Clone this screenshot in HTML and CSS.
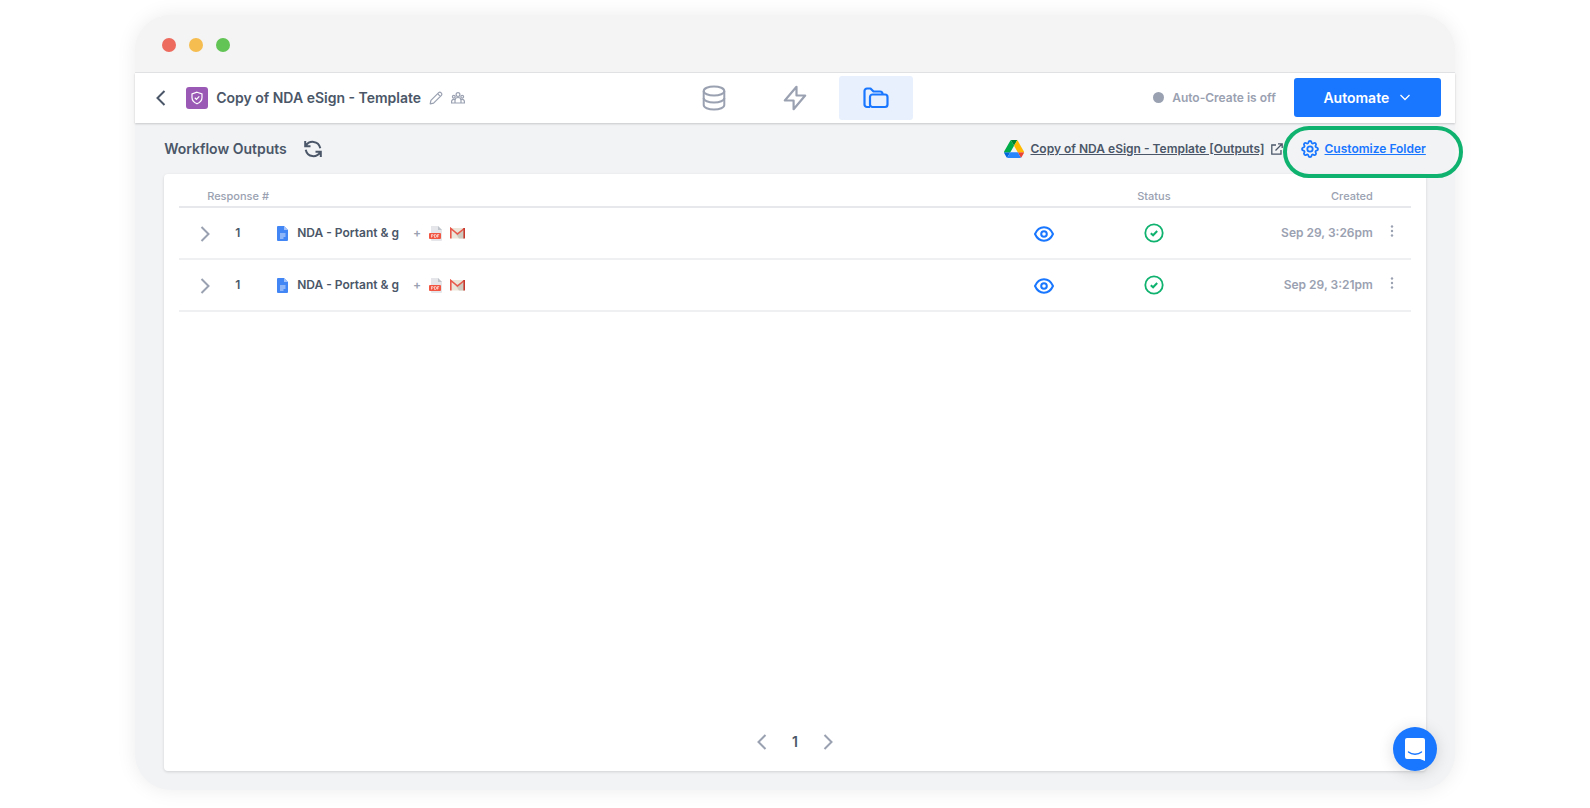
FILE: index.html
```html
<!DOCTYPE html>
<html lang="en">
  <head>
    <meta charset="UTF-8" />
    <meta name="viewport" content="width=device-width, initial-scale=1" />
    <title>Workflow Outputs</title>
    <link rel="stylesheet" href="styles.css">
  </head>
  <body>
    <svg class="sprite" aria-hidden="true">
      <symbol id="chevron-right" viewBox="0 0 10 16"><path d="M1.5 1l7 7-7 7" fill="none" stroke="currentColor" stroke-width="2"/></symbol>
      <symbol id="chevron-left" viewBox="0 0 10 16"><path d="M8.5 1l-7 7 7 7" fill="none" stroke="currentColor" stroke-width="2"/></symbol>
      <symbol id="doc" viewBox="0 0 11 15">
        <path d="M1 0h6l4 4v10a1 1 0 0 1-1 1H1a1 1 0 0 1-1-1V1a1 1 0 0 1 1-1z" fill="#4285f4"/>
        <path d="M7 0l4 4H7z" fill="#a1c2fa"/>
        <path d="M3 8h5.500M3 10h5.500M3 12h3.500" stroke="#dce8fd" stroke-width="1"/>
      </symbol>
      <symbol id="pdf" viewBox="0 0 13 15">
        <path d="M2 0h7l4 4v10a1 1 0 0 1-1 1H3a1 1 0 0 1-1-1z" fill="#e4e6e9"/>
        <path d="M9 0l4 4H9z" fill="#bfc4ca"/>
        <rect y="7" width="12" height="6" rx="1" fill="#f15642"/>
        <path d="M2.500 11.500v-3h1a.8.8 0 0 1 0 1.600h-1M5.500 8.500v3h.6a1.500 1.500 0 0 0 0-3zM8.500 11.500v-3h1.700M8.500 10h1.400" fill="none" stroke="#fff" stroke-width=".6"/>
      </symbol>
      <symbol id="gmail" viewBox="0 0 15 12">
        <path d="M1 1h13v10.500H1z" fill="#ece6da"/>
        <path d="M14 2v9.500H9L5.500 6.500z" fill="#cfcabf"/>
        <path d="M.8 11.500V1.500l6.700 5.500 6.700-5.500" fill="none" stroke="#e8584b" stroke-width="1.600"/>
        <path d="M14.200 1v10.500" stroke="#c5372c" stroke-width="1.600"/>
      </symbol>
      <symbol id="eye" viewBox="0 0 20 16">
        <path d="M1 8c2-4.500 5.200-6.700 9-6.700S17 3.500 19 8c-2 4.500-5.200 6.700-9 6.700S3 12.500 1 8z" fill="none" stroke="currentColor" stroke-width="2" stroke-linejoin="round"/>
        <circle cx="10" cy="8" r="2.800" fill="none" stroke="currentColor" stroke-width="2"/>
      </symbol>
      <symbol id="check" viewBox="0 0 20 20">
        <circle cx="10" cy="10" r="8.700" fill="none" stroke="currentColor" stroke-width="1.800"/>
        <path d="M6.800 10.200l2.300 2.100 4.100-4.300" fill="none" stroke="currentColor" stroke-width="2"/>
      </symbol>
      <symbol id="dots" viewBox="0 0 4 12">
        <g fill="currentColor"><circle cx="2" cy="1.500" r="1.200"/><circle cx="2" cy="6" r="1.200"/><circle cx="2" cy="10.500" r="1.200"/></g>
      </symbol>
    </svg>

    <div class="window">
      <div class="window__bar">
        <span class="window__dot window__dot--red"></span>
        <span class="window__dot window__dot--yellow"></span>
        <span class="window__dot window__dot--green"></span>
      </div>

      <header class="header">
        <div class="header__left">
          <button class="icon-button back" aria-label="Back">
            <svg width="10" height="16"><use href="#chevron-left"/></svg>
          </button>
          <span class="badge">
            <svg width="14" height="14" viewBox="0 0 14 14" fill="none" stroke="#fff" stroke-width="1.200">
              <path d="M7 1.200l5 1.700v3.600c0 3-2 5-5 6.300-3-1.300-5-3.300-5-6.300V2.900z"/>
              <path d="M4.800 6.800l1.600 1.500L9.300 5.300"/>
            </svg>
          </span>
          <h1 class="header__title">Copy of NDA eSign - Template</h1>
          <button class="icon-button edit" aria-label="Rename">
            <svg width="14" height="14" viewBox="0 0 14 14" fill="none" stroke="currentColor" stroke-width="1.200" stroke-linejoin="round">
              <path d="M1.200 12.800l.7-3.400 7.800-7.800c1.500-1.500 4.200 1.200 2.700 2.700l-7.800 7.800zM8.600 2.700l2.700 2.700"/>
            </svg>
          </button>
          <button class="icon-button share" aria-label="Share">
            <svg width="14" height="12" viewBox="0 0 14 12" fill="none" stroke="currentColor" stroke-width="1.200">
              <circle cx="7" cy="2.600" r="1.900"/>
              <circle cx="2.800" cy="4.700" r="1.400"/>
              <circle cx="11.200" cy="4.700" r="1.400"/>
              <path d="M4 11V8.500a3 3 0 0 1 6 0V11M4 11H.6V9.500a2.200 2.200 0 0 1 3.400-1.800M10 11h3.400V9.500A2.200 2.200 0 0 0 10 7.700M4 11h6"/>
            </svg>
          </button>
        </div>

        <nav class="tabs">
          <button class="tab" aria-label="Data">
            <svg width="24" height="26" viewBox="0 0 24 26" fill="none" stroke="currentColor" stroke-width="2">
              <ellipse cx="12" cy="6" rx="10.300" ry="4.600"/>
              <path d="M1.700 6v14c0 2.600 4.600 4.600 10.300 4.600s10.300-2 10.300-4.600V6"/>
              <path d="M1.700 13c0 2.600 4.600 4.600 10.300 4.600s10.300-2 10.300-4.600"/>
            </svg>
          </button>
          <button class="tab" aria-label="Workflow">
            <svg width="24" height="26" viewBox="0 0 24 26" fill="none" stroke="currentColor" stroke-width="2.200" stroke-linejoin="round">
              <path d="M13.500 1.800L1.800 15.500h8.800v8.700L22.200 10.500h-8.700z"/>
            </svg>
          </button>
          <button class="tab tab--active" aria-label="Outputs">
            <svg width="26" height="22" viewBox="0 0 26 22" fill="none" stroke="currentColor" stroke-width="2.200" stroke-linejoin="round">
              <path d="M7 20H4a2.500 2.500 0 0 1-2.500-2.500V4A2.500 2.500 0 0 1 4 1.500h3.500l3 3H17A2.500 2.500 0 0 1 19.500 7v.5"/>
              <rect x="7" y="7.500" width="17.500" height="12.500" rx="2.500"/>
            </svg>
          </button>
        </nav>

        <div class="header__right">
          <span class="status">Auto-Create is off</span>
          <button class="automate">
            Automate
            <svg width="12" height="7" viewBox="0 0 12 7"><path d="M1.500 1l4.500 4.500L10.500 1" fill="none" stroke="currentColor" stroke-width="1.300"/></svg>
          </button>
        </div>
      </header>

      <main class="main">
        <div class="toolbar">
          <h2 class="toolbar__title">Workflow Outputs</h2>
          <button class="icon-button refresh" aria-label="Refresh">
            <svg width="18" height="18" viewBox="0 0 18 18" fill="none" stroke="currentColor" stroke-width="2">
              <path d="M1.200 1v5.200h5.300M1.800 5.800C5.200.2 14.400.2 16.300 8.200"/>
              <path d="M16.800 17v-5.200h-5.300M16.200 12.200C12.800 17.800 3.600 17.800 1.700 9.800"/>
            </svg>
          </button>

          <a class="drive" href="#">
            <svg width="20" height="18" viewBox="0 0 87 78">
              <path d="M6.600 66.850l3.850 6.650c.8 1.400 1.950 2.500 3.300 3.300L27.500 53H0c0 1.550.4 3.100 1.200 4.500z" fill="#0066da"/>
              <path d="M43.650 25L29.900 1.200c-1.350.8-2.500 1.900-3.300 3.300L1.200 48.500A9 9 0 0 0 0 53h27.500z" fill="#00ac47"/>
              <path d="M73.550 76.800c1.350-.8 2.500-1.900 3.300-3.300l9.250-16c.8-1.400 1.200-2.950 1.200-4.500H59.800l5.850 11.500z" fill="#ea4335"/>
              <path d="M43.650 25L57.400 1.200C56.050.4 54.500 0 52.900 0H34.400c-1.600 0-3.150.45-4.500 1.200z" fill="#00832d"/>
              <path d="M59.800 53H27.500L13.750 76.800c1.350.8 2.900 1.200 4.500 1.200h50.800c1.600 0 3.150-.45 4.500-1.200z" fill="#2684fc"/>
              <path d="M73.400 26.500l-12.700-22c-.8-1.400-1.950-2.500-3.300-3.300L43.650 25 59.800 53h27.450c0-1.550-.4-3.100-1.200-4.500z" fill="#ffba00"/>
            </svg>
            <span class="drive__name">Copy of NDA eSign - Template [Outputs]</span>
            <svg width="12" height="12" viewBox="0 0 12 12" fill="none" stroke="currentColor" stroke-width="1.300">
              <path d="M5 2H.8v9.200H10V7M7 .8h4.200V5M11 1L4.500 7.500"/>
            </svg>
          </a>

          <a class="customize" href="#">
            <svg width="18" height="18" viewBox="0 0 24 24" fill="none" stroke="currentColor" stroke-width="2.400" stroke-linejoin="round">
              <circle cx="12" cy="12" r="3.600"/>
              <path d="M9.800 3.400C10.400.6 13.600.6 14.200 3.400c.3 1.200 1.400 1.700 2.500 1 2.300-1.400 4.300.6 2.900 2.900-.7 1.100-.2 2.200 1 2.500 2.800.6 2.800 3.800 0 4.400-1.200.3-1.700 1.400-1 2.500 1.400 2.300-.6 4.300-2.900 2.900-1.100-.7-2.200-.2-2.500 1-.6 2.800-3.800 2.800-4.400 0-.3-1.200-1.400-1.700-2.500-1-2.300 1.400-4.300-.6-2.900-2.900.7-1.100.2-2.200-1-2.500-2.800-.6-2.800-3.800 0-4.400 1.200-.3 1.700-1.400 1-2.500-1.400-2.300.6-4.300 2.900-2.900 1.100.7 2.200.2 2.500-1z"/>
            </svg>
            <span class="customize__text">Customize Folder</span>
          </a>
        </div>

        <section class="card">
          <table class="outputs">
            <colgroup>
              <col class="col-expand">
              <col class="col-number">
              <col>
              <col class="col-view">
              <col class="col-status">
              <col class="col-created">
              <col class="col-menu">
            </colgroup>
            <thead>
              <tr>
                <th class="outputs__response" colspan="2">Response #</th>
                <th></th>
                <th></th>
                <th class="outputs__center">Status</th>
                <th class="outputs__created">Created</th>
                <th></th>
              </tr>
            </thead>
            <tbody>
              <tr>
                <td class="outputs__expand"><button class="icon-button" aria-label="Expand"><svg width="10" height="16"><use href="#chevron-right"/></svg></button></td>
                <td class="outputs__number">1</td>
                <td>
                  <div class="file">
                    <svg width="11" height="15"><use href="#doc"/></svg>
                    <span class="file__name">NDA - Portant &amp; g</span>
                    <span class="file__plus">+</span>
                    <svg class="file__pdf" width="13" height="15"><use href="#pdf"/></svg>
                    <svg width="15" height="12"><use href="#gmail"/></svg>
                  </div>
                </td>
                <td class="outputs__center"><button class="icon-button view" aria-label="View"><svg width="20" height="16"><use href="#eye"/></svg></button></td>
                <td class="outputs__center"><svg class="done" width="20" height="20"><use href="#check"/></svg></td>
                <td class="outputs__created">Sep 29, 3:26pm</td>
                <td class="outputs__menu"><button class="icon-button" aria-label="More"><svg width="4" height="12"><use href="#dots"/></svg></button></td>
              </tr>
              <tr>
                <td class="outputs__expand"><button class="icon-button" aria-label="Expand"><svg width="10" height="16"><use href="#chevron-right"/></svg></button></td>
                <td class="outputs__number">1</td>
                <td>
                  <div class="file">
                    <svg width="11" height="15"><use href="#doc"/></svg>
                    <span class="file__name">NDA - Portant &amp; g</span>
                    <span class="file__plus">+</span>
                    <svg class="file__pdf" width="13" height="15"><use href="#pdf"/></svg>
                    <svg width="15" height="12"><use href="#gmail"/></svg>
                  </div>
                </td>
                <td class="outputs__center"><button class="icon-button view" aria-label="View"><svg width="20" height="16"><use href="#eye"/></svg></button></td>
                <td class="outputs__center"><svg class="done" width="20" height="20"><use href="#check"/></svg></td>
                <td class="outputs__created">Sep 29, 3:21pm</td>
                <td class="outputs__menu"><button class="icon-button" aria-label="More"><svg width="4" height="12"><use href="#dots"/></svg></button></td>
              </tr>
            </tbody>
          </table>

          <nav class="pager">
            <button class="icon-button" aria-label="Previous page"><svg width="10" height="16"><use href="#chevron-left"/></svg></button>
            <span class="pager__page">1</span>
            <button class="icon-button" aria-label="Next page"><svg width="10" height="16"><use href="#chevron-right"/></svg></button>
          </nav>
        </section>
      </main>

      <button class="chat" aria-label="Open chat">
        <svg width="20" height="23" viewBox="0 0 20 23">
          <path d="M2 0h16a2 2 0 0 1 2 2v21l-5-2H2a2 2 0 0 1-2-2V2a2 2 0 0 1 2-2z" fill="#fff"/>
          <path d="M3.500 14c3.500 3 9.500 3 13 0" fill="none" stroke="#1976ff" stroke-width="1.400" stroke-linecap="round"/>
        </svg>
      </button>
    </div>
  </body>
</html>
```
FILE: styles.css
```css
* {
  box-sizing: border-box;
}

body {
  display: flex;
  justify-content: center;
  min-height: 100vh;
  margin: 0;
  padding: 15px 0 18px;
  background-color: white;
  color: #4b5768;
  font-family: Inter, "Liberation Sans", sans-serif;
  font-size: 12px;
  font-weight: 600;
  line-height: 20px;
}

svg {
  display: block;
  flex: none;
}

h1,
h2 {
  margin: 0;
  font-weight: 600;
  white-space: nowrap;
}

button {
  font: inherit;
  cursor: pointer;
}

.sprite {
  position: absolute;
  width: 0;
  height: 0;
}

.icon-button {
  display: inline-flex;
  padding: 0;
  border: none;
  background: none;
  color: #9aa1b1;
  vertical-align: middle;
}

.window {
  position: relative;
  display: flex;
  flex-direction: column;
  width: 83%;
  border-radius: 36px;
  background-color: #f2f3f5;
  box-shadow: 0 0 20px rgba(0, 0, 0, 0.08);
}

.window__bar {
  display: flex;
  align-items: center;
  gap: 13px;
  height: 58px;
  padding: 3px 27px 0;
  border-bottom: 1px solid #e3e4e5;
  border-radius: 36px 36px 0 0;
  background-color: #f4f4f4;
}

.window__dot {
  width: 14px;
  height: 14px;
  border-radius: 50%;
}

.window__dot--red {
  background-color: #ed6a5e;
}

.window__dot--yellow {
  background-color: #f5bd4f;
}

.window__dot--green {
  background-color: #61c454;
}

.header {
  display: grid;
  grid-template-columns: 1fr auto 1fr;
  align-items: center;
  height: 50px;
  padding: 0 14px 1px;
  background-color: white;
  box-shadow: 0 1px 2px rgba(0, 0, 0, 0.18);
}

.header__left,
.header__right {
  display: flex;
  align-items: center;
}

.header__right {
  justify-content: flex-end;
}

.header__title {
  margin: 0 8px;
  font-size: 14px;
}

.back {
  margin: 0 20px 0 7px;
  color: #4b5768;
}

.badge {
  display: flex;
  align-items: center;
  justify-content: center;
  width: 22px;
  height: 22px;
  border-radius: 3px;
  background-color: #9b59b6;
}

.share {
  margin-left: 8px;
}

.tabs {
  display: flex;
  gap: 7px;
}

.tab {
  display: flex;
  align-items: center;
  justify-content: center;
  width: 74px;
  height: 44px;
  border: none;
  border-radius: 3px;
  background: none;
  color: #9aa1b1;
}

.tab--active {
  background-color: #e8f0fe;
  color: #1976ff;
}

.status {
  display: flex;
  align-items: center;
  gap: 8px;
  color: #9aa1b1;
}

.status:before {
  content: '';
  width: 11px;
  height: 11px;
  border-radius: 50%;
  background-color: #9aa1b1;
}

.automate {
  display: flex;
  align-items: center;
  justify-content: center;
  gap: 10px;
  width: 147px;
  height: 39px;
  margin-left: 18px;
  border: none;
  border-radius: 3px;
  background-color: #1976ff;
  color: white;
  font-size: 14px;
}

.main {
  display: flex;
  flex: 1;
  flex-direction: column;
  padding: 0 29px 19px;
}

.toolbar {
  display: flex;
  align-items: center;
  height: 51px;
}

.toolbar__title {
  font-size: 14px;
}

.refresh {
  margin-left: 17px;
  color: #4b5768;
}

.drive,
.customize {
  display: flex;
  align-items: center;
  gap: 6px;
  text-decoration: none;
  white-space: nowrap;
}

.drive {
  margin-left: auto;
  color: #4b5768;
}

.customize {
  position: relative;
  margin-left: 18px;
  color: #1976ff;
}

.drive__name,
.customize__text {
  text-decoration: underline;
}

.customize:after {
  content: '';
  position: absolute;
  top: -13px;
  right: -37px;
  bottom: -19px;
  left: -18px;
  border: 4px solid #10b26f;
  border-radius: 26px;
}

.card {
  display: flex;
  flex: 1;
  flex-direction: column;
  padding: 10px 15px 19px;
  border-radius: 4px;
  background-color: white;
  box-shadow: 0 1px 3px rgba(0, 0, 0, 0.14);
}

.outputs {
  width: 100%;
  border-collapse: collapse;
  table-layout: fixed;
}

.col-expand {
  width: 46px;
}

.col-number {
  width: 52px;
}

.col-view,
.col-status {
  width: 110px;
}

.col-created {
  width: 164px;
}

.col-menu {
  width: 38px;
}

.outputs th {
  height: 23px;
  padding: 2px 0 0;
  border-bottom: 2px solid #e6e8ec;
  color: #9aa1b1;
  font-size: 11px;
  font-weight: 500;
  text-align: left;
}

.outputs td {
  height: 52px;
  padding: 0;
  border-bottom: 2px solid #eff0f2;
}

.outputs td svg {
  display: inline-block;
  vertical-align: middle;
}

.outputs .outputs__response {
  padding-left: 28px;
}

.outputs .outputs__expand {
  padding-left: 21px;
}

.outputs .outputs__number {
  padding-left: 10px;
}

.outputs .outputs__center {
  text-align: center;
}

.outputs .outputs__created {
  color: #9aa1b1;
  text-align: right;
}

.outputs .outputs__menu {
  padding: 0 0 6px;
  text-align: center;
}

.file {
  display: flex;
  align-items: center;
}

.file__name {
  margin: 0 14px 0 9px;
}

.file__plus {
  color: #9aa1b1;
}

.file__pdf {
  margin: 0 8px;
}

.view {
  color: #1976ff;
}

.done {
  color: #10b26f;
}

.pager {
  display: flex;
  align-items: center;
  justify-content: center;
  gap: 24px;
  margin-top: auto;
}

.pager__page {
  width: 8px;
  font-size: 14px;
  text-align: center;
}

.chat {
  position: absolute;
  right: 18px;
  bottom: 19px;
  display: flex;
  align-items: center;
  justify-content: center;
  width: 44px;
  height: 44px;
  padding: 0;
  border: none;
  border-radius: 50%;
  background-color: #1976ff;
  box-shadow: 0 2px 16px rgba(0, 0, 0, 0.14);
}
```
